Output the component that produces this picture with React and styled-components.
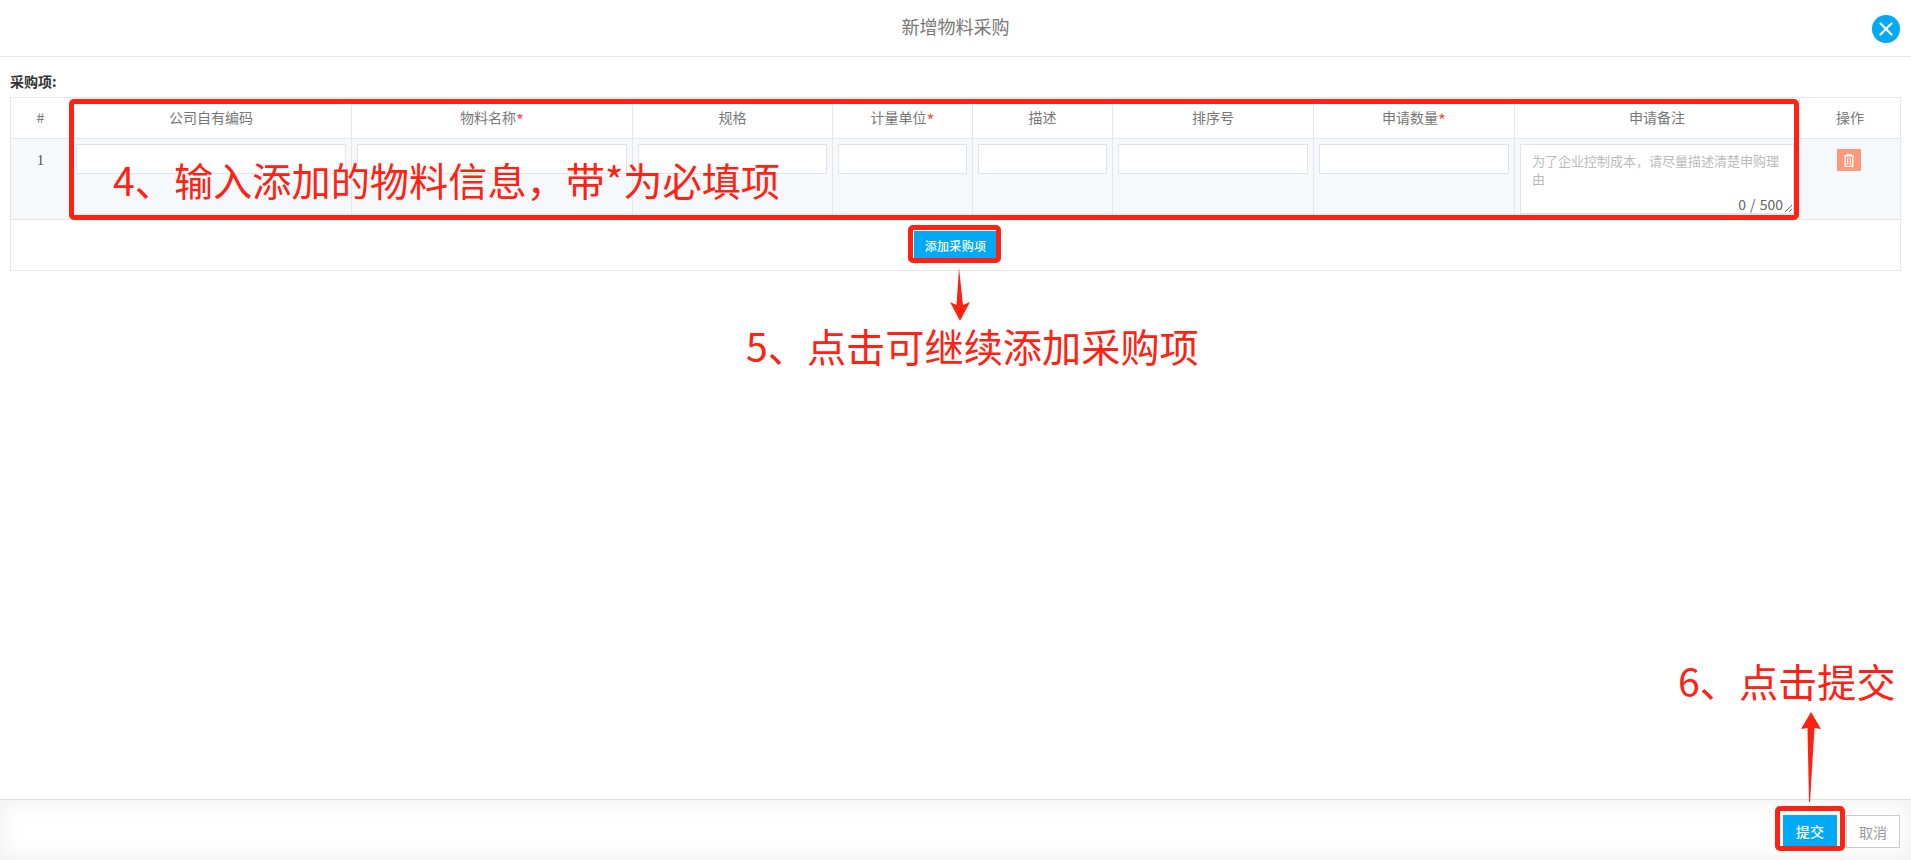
import React from "react";
import styled, { createGlobalStyle } from "styled-components";

const GlobalStyle = createGlobalStyle`
html, body {
    margin: 0;
    padding: 0;
    height: 100%;
    overflow: hidden;
    background: #fff;
}
* {
    box-sizing: border-box;
}
`;

const FONT = `"Noto Sans CJK SC", "Noto Sans", sans-serif`;

const Page = styled.div`
position: relative;
display: flex;
flex-direction: column;
height: 860px;
font-family: ${FONT};
color: #666;
`;

const Header = styled.header`
position: relative;
height: 57px;
flex-shrink: 0;
display: flex;
align-items: center;
justify-content: center;
border-bottom: 1px solid #e5e5e5;
padding-bottom: 4px;
`;

const Title = styled.h1`
margin: 0;
font-size: 18px;
font-weight: 400;
color: #777;
`;

const CloseBtn = styled.button`
position: absolute;
right: 11px;
top: 15px;
width: 28px;
height: 28px;
padding: 0;
border: none;
border-radius: 50%;
background: #02a9f4;
display: flex;
align-items: center;
justify-content: center;
`;

const Body = styled.main`
flex: 1;
padding: 14px 11px 0 10px;
`;

const SectionLabel = styled.div`
font-size: 14px;
font-weight: 700;
line-height: 20px;
color: #333;
margin-bottom: 6px;
`;

const Table = styled.table`
width: 100%;
table-layout: fixed;
border-collapse: collapse;
border: 1px solid #e4e7ea;
`;

const Th = styled.th`
height: 41px;
padding: 0 0 3px;
font-size: 14px;
font-weight: 400;
color: #777;
text-align: center;
border: 1px solid #e4e7ea;
`;

const Star = styled.span`
font-size: 17px;
line-height: 14px;
vertical-align: -4px;
color: #f0563a;
`;

const Td = styled.td`
height: 81px;
padding: 5px;
vertical-align: top;
text-align: center;
font-size: 14px;
background: #f5f9fc;
border: 1px solid #e4e7ea;
`;

const IndexText = styled.div`
font-family: "Liberation Serif", serif;
font-size: 15px;
line-height: 32px;
color: #555;
`;

const TextInput = styled.input`
display: block;
width: 100%;
height: 30px;
border: 1px solid #dfe4e8;
background: #fff;
outline: none;
`;

const AreaWrap = styled.div`
position: relative;
height: 70px;
`;

const Area = styled.textarea`
display: block;
width: 100%;
height: 70px;
padding: 7px 8px 7px 11px;
border: 1px solid #dfe4e8;
outline: none;
font-family: ${FONT};
font-size: 13px;
line-height: 18px;
resize: both;

&::placeholder {
    color: #bbb;
}
`;

const Counter = styled.span`
position: absolute;
right: 11px;
bottom: 0;
font-size: 14px;
word-spacing: 1px;
line-height: 20px;
color: #666;
`;

const TrashBtn = styled.button`
width: 24px;
height: 22px;
margin: 5px 2px 0 0;
padding: 0;
border: none;
background: #ff9878;
display: inline-flex;
align-items: center;
justify-content: center;
`;

const AddCell = styled.td`
height: 51px;
padding: 0;
text-align: center;
vertical-align: middle;
border: 1px solid #e4e7ea;
`;

const PrimaryBtn = styled.button`
width: ${(p) => p.$w}px;
height: ${(p) => p.$h}px;
padding: 0;
border: none;
background: #02a9f4;
color: #fff;
font-family: ${FONT};
font-size: ${(p) => p.$size}px;
font-weight: 500;
letter-spacing: 0.3px;
`;

const Footer = styled.footer`
height: 61px;
flex-shrink: 0;
display: flex;
justify-content: flex-end;
align-items: flex-start;
gap: 9px;
padding: 15px 11px 0 0;
border-top: 1px solid #e0e0e0;
background: #fff;
box-shadow: inset 0 0 24px rgba(0, 0, 0, 0.07);
`;

const CancelBtn = styled.button`
width: 54px;
height: 33px;
padding: 0;
border: 1px solid #ccc;
background: #fff;
color: #999;
font-family: ${FONT};
font-size: 14px;
`;

// screenshot annotations, drawn on top of the page
const RedBox = styled.div`
position: absolute;
left: ${(p) => p.$x}px;
top: ${(p) => p.$y}px;
width: ${(p) => p.$w}px;
height: ${(p) => p.$h}px;
border: 5px solid #ff2111;
border-radius: 5px;
pointer-events: none;
`;

const RedText = styled.div`
position: absolute;
left: ${(p) => p.$x}px;
top: ${(p) => p.$y}px;
font-size: 39.2px;
line-height: 50px;
white-space: nowrap;
color: #ff2111;
`;

const Arrow = styled.svg`
position: absolute;
left: ${(p) => p.$x}px;
top: ${(p) => p.$y}px;
`;

const columns = [
    { label: "#", width: 60 },
    { label: "公司自有编码", width: 281 },
    { label: "物料名称", width: 281, required: true },
    { label: "规格", width: 200 },
    { label: "计量单位", width: 140, required: true },
    { label: "描述", width: 140 },
    { label: "排序号", width: 201 },
    { label: "申请数量", width: 201, required: true },
    { label: "申请备注", width: 285 },
    { label: "操作", width: 101 },
];

function TrashIcon() {
    return (
        <svg width="10" height="13" viewBox="0 0 10 13" fill="none" stroke="#fff">
            <path d="M0 2h10" strokeWidth="1.4" />
            <path d="M3 1.5V.6h4v.9" strokeWidth="1.1" />
            <path d="M1.2 2.5v9.8h7.6V2.5" strokeWidth="1.3" />
            <path d="M3.7 4v6.8M6.3 4v6.8" strokeWidth="1.1" />
        </svg>
    );
}

export default function App() {
    return (
        <Page>
            <GlobalStyle />
            <Header>
                <Title>新增物料采购</Title>
                <CloseBtn>
                    <svg width="14" height="14" viewBox="0 0 14 14" stroke="#fff" strokeWidth="2.2" strokeLinecap="round">
                        <path d="M1.5 1.5l11 11M12.5 1.5l-11 11" />
                    </svg>
                </CloseBtn>
            </Header>
            <Body>
                <SectionLabel>采购项:</SectionLabel>
                <Table>
                    <colgroup>
                        {columns.map((c) => <col key={c.label} style={{ width: c.width }} />)}
                    </colgroup>
                    <thead>
                        <tr>
                            {columns.map((c) => (
                                <Th key={c.label}>{c.label}{c.required && <Star>*</Star>}</Th>
                            ))}
                        </tr>
                    </thead>
                    <tbody>
                        <tr>
                            <Td><IndexText>1</IndexText></Td>
                            <Td><TextInput /></Td>
                            <Td><TextInput /></Td>
                            <Td><TextInput /></Td>
                            <Td><TextInput /></Td>
                            <Td><TextInput /></Td>
                            <Td><TextInput /></Td>
                            <Td><TextInput /></Td>
                            <Td>
                                <AreaWrap>
                                    <Area placeholder="为了企业控制成本，请尽量描述清楚申购理由" />
                                    <Counter>0 / 500</Counter>
                                </AreaWrap>
                            </Td>
                            <Td><TrashBtn><TrashIcon /></TrashBtn></Td>
                        </tr>
                        <tr>
                            <AddCell colSpan={columns.length}>
                                <PrimaryBtn $w={83} $h={29} $size={12}>添加采购项</PrimaryBtn>
                            </AddCell>
                        </tr>
                    </tbody>
                </Table>
            </Body>
            <Footer>
                <PrimaryBtn $w={54} $h={31} $size={14}>提交</PrimaryBtn>
                <CancelBtn>取消</CancelBtn>
            </Footer>

            <RedBox $x={69} $y={99} $w={1730} $h={121} />
            <RedBox $x={908} $y={225} $w={93} $h={38} />
            <RedBox $x={1775} $y={806} $w={70} $h={45} />

            <RedText $x={113} $y={154}>4、输入添加的物料信息，带*为必填项</RedText>
            <RedText $x={746} $y={320}>5、点击可继续添加采购项</RedText>
            <RedText $x={1678} $y={655}>6、点击提交</RedText>

            <Arrow $x={949} $y={267} width="22" height="55" viewBox="0 0 22 55">
                <path d="M10 1L7.5 38L1 35L11 54L21 35L14 38Z" fill="#ff2111" />
            </Arrow>
            <Arrow $x={1800} $y={711} width="22" height="92" viewBox="0 0 22 92">
                <path d="M11 1L1 18L7.5 17L9 91L10 91L14.5 17L21 18Z" fill="#ff2111" />
            </Arrow>
        </Page>
    );
}
